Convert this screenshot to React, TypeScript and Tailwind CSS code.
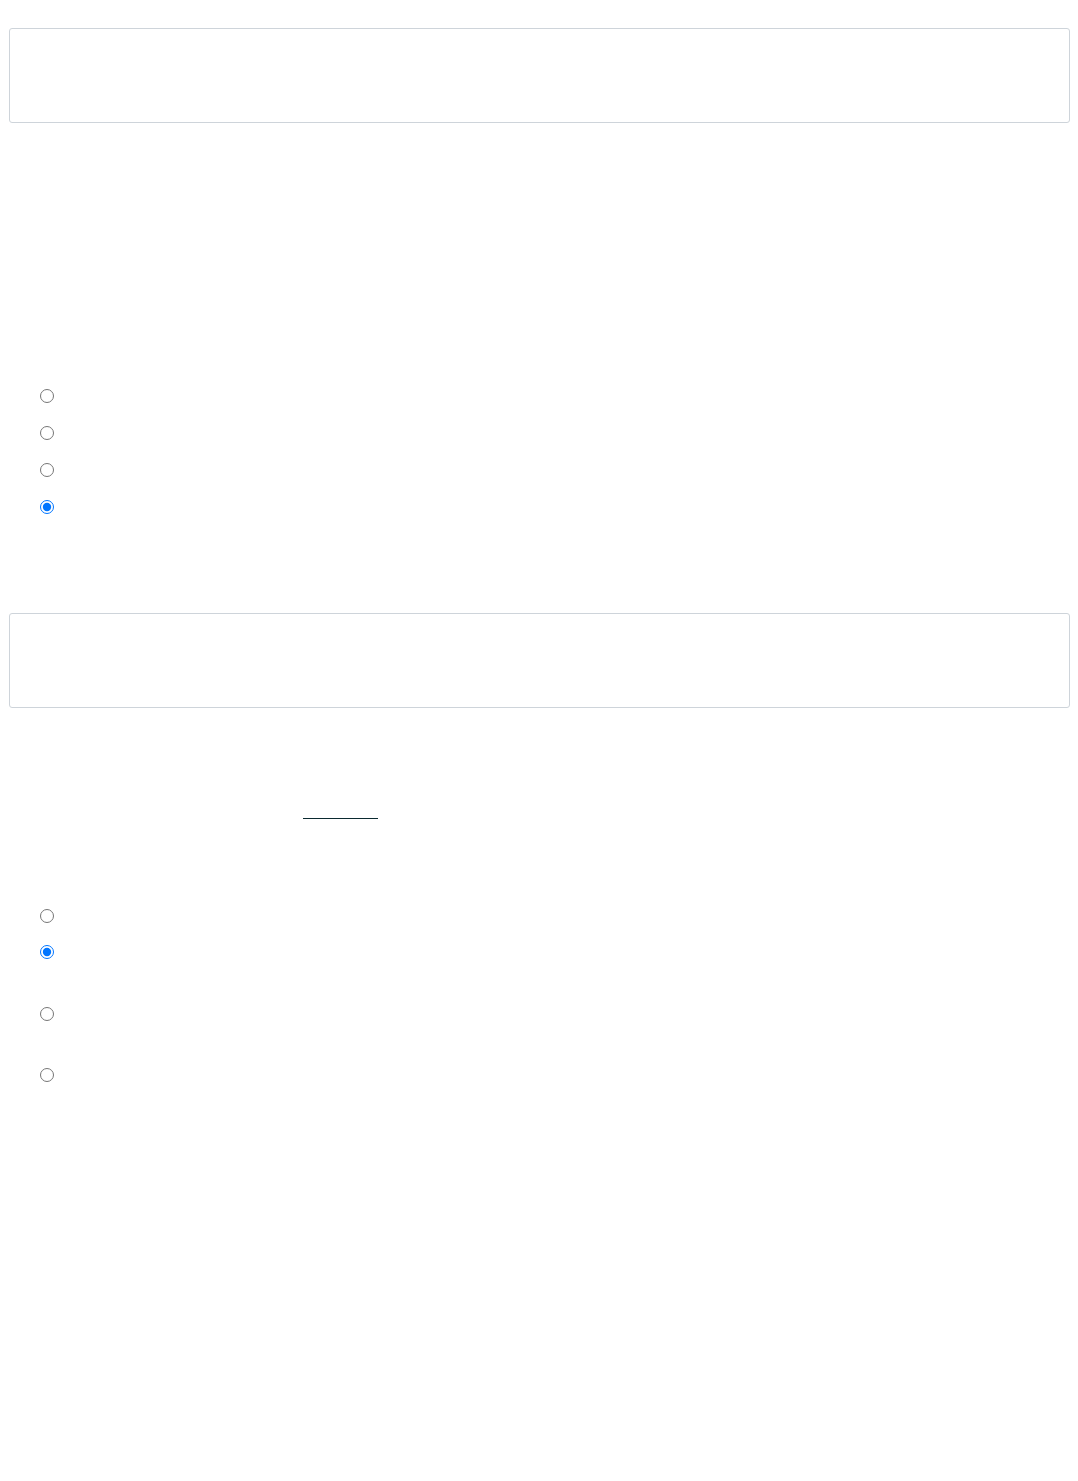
import React from "react";

type Opt = { id: string; checked?: boolean; gap: string };

const GROUP_A: Opt[] = [
  { id: "a1", gap: "mt-0" },
  { id: "a2", gap: "mt-[23px]" },
  { id: "a3", gap: "mt-[23px]" },
  { id: "a4", checked: true, gap: "mt-[23px]" },
];

const GROUP_B: Opt[] = [
  { id: "b1", gap: "mt-0" },
  { id: "b2", checked: true, gap: "mt-[22px]" },
  { id: "b3", gap: "mt-[48px]" },
  { id: "b4", gap: "mt-[47px]" },
];

function Panel() {
  return <div className="h-[95px] rounded-[3px] border border-[#ced4da] bg-white" />;
}

function RadioGroup({ name, options }: { name: string; options: Opt[] }) {
  return (
    <div className="flex flex-col pl-[31px]">
      {options.map((o) => (
        <label key={o.id} className={`${o.gap} flex h-[14px] items-center`}>
          <input
            type="radio"
            name={name}
            defaultChecked={o.checked}
            className="m-0 h-[14px] w-[14px]"
          />
        </label>
      ))}
    </div>
  );
}

export default function App() {
  return (
    <div
      className="min-h-[1481px] bg-white px-[9px] pt-[28px] pr-[8px] text-white"
      style={{ fontFamily: '"Liberation Sans", Arial, sans-serif' }}
    >
      <Panel />

      <div className="mt-[266px]">
        <RadioGroup name="q1" options={GROUP_A} />
      </div>

      <div className="mt-[99px]">
        <Panel />
      </div>

      <div className="ml-[294px] mt-[110px] h-px w-[75px] bg-[#0b2a30]" />

      <div className="mt-[90px]">
        <RadioGroup name="q2" options={GROUP_B} />
      </div>
    </div>
  );
}
